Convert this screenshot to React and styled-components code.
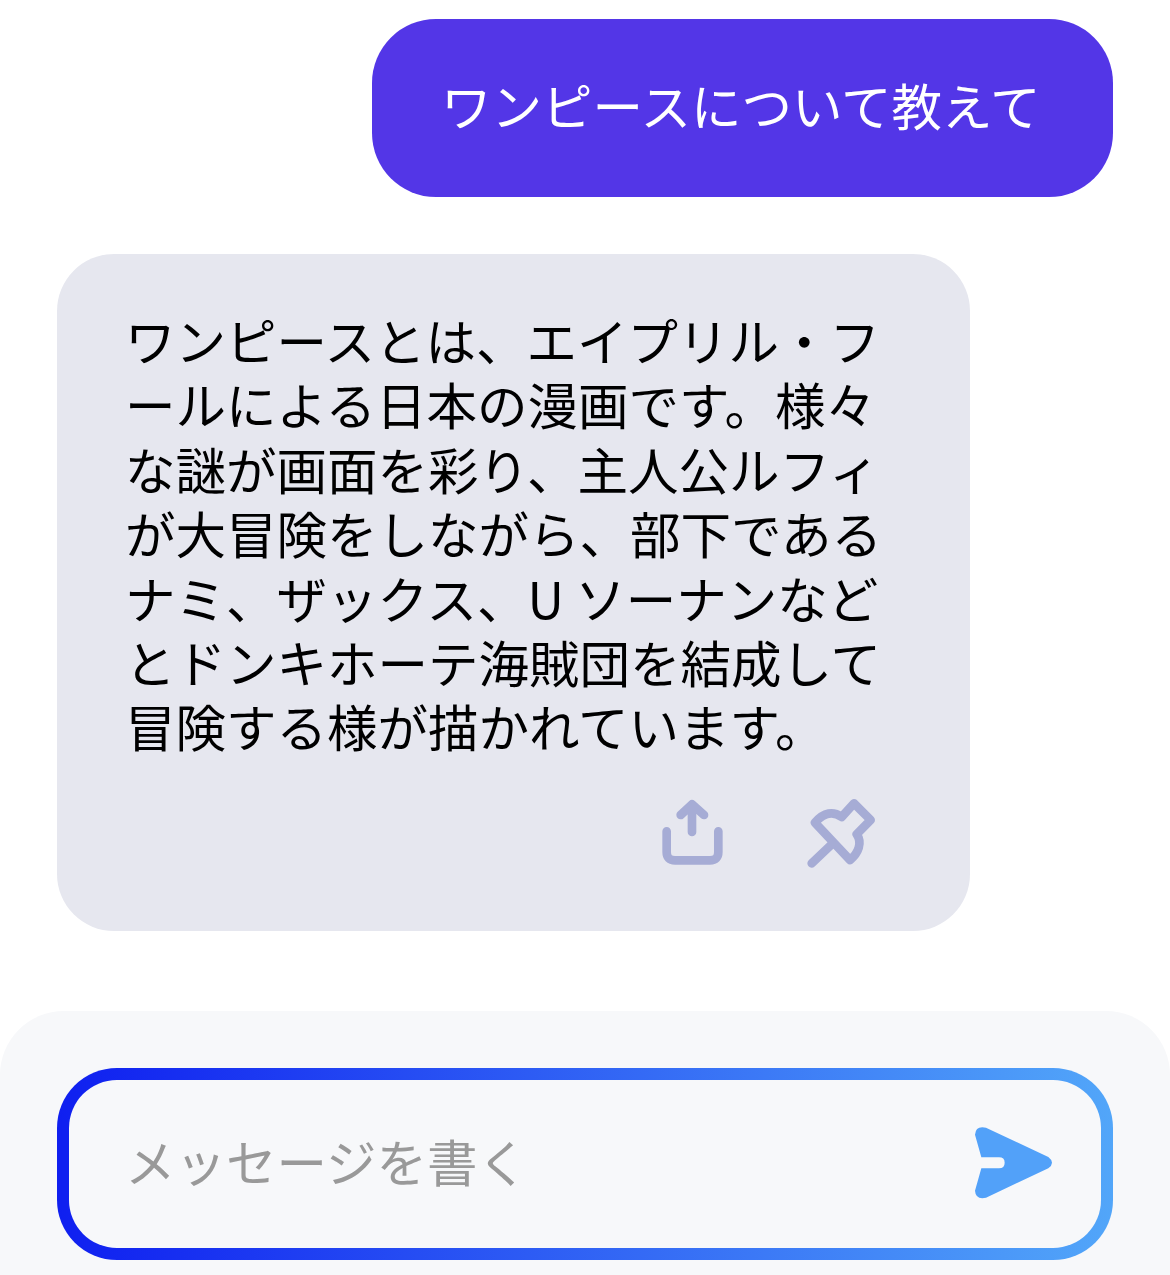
import React from 'react'
import styled, { createGlobalStyle } from 'styled-components'

const answerLines = [
  'ワンピースとは、エイプリル・フ',
  'ールによる日本の漫画です。様々',
  'な謎が画面を彩り、主人公ルフィ',
  'が大冒険をしながら、部下である',
  'ナミ、ザックス、U ソーナンなど',
  'とドンキホーテ海賊団を結成して',
  '冒険する様が描かれています。',
]

function ShareIcon() {
  return (
    <svg width="66.67" height="71.67" viewBox="60 50 200 215" fill="none" stroke="#a6acd5" strokeWidth="26" strokeLinecap="round" strokeLinejoin="round">
      <path d="M80 153 V215 Q80 240 105 240 H210 Q235 240 235 215 V153" />
      <path d="M156 155 V72 M122 104 L156 72 L192 104" />
    </svg>
  )
}

function PinIcon() {
  return (
    <svg width="73.33" height="73.33" viewBox="495 50 220 220" fill="none" stroke="#a6acd5" strokeWidth="26" strokeLinecap="round" strokeLinejoin="round">
      <path d="M525 130 C552 98 580 95 605 113 L642 72 L692 122 L650 165 C668 190 655 222 630 242 Z" />
      <path d="M515 252 L575 195" />
    </svg>
  )
}

function SendIcon() {
  return (
    <svg width="80" height="75" viewBox="70 195 240 225">
      <path
        fill="#52a1f9"
        d="M109 203 L296 291 Q318 308 296 325 L109 413 Q78 420 76 392 L95 325 H148 Q165 325 165 308 Q165 292 148 292 H95 L76 224 Q78 196 109 203 Z"
      />
    </svg>
  )
}

export default function App() {
  return (
    <Page>
      <GlobalStyle />
      <Messages>
        <UserBubble>ワンピースについて教えて</UserBubble>
        <BotBubble>
          {answerLines.map(line => (
            <Line key={line}>{line}</Line>
          ))}
          <Actions>
            <ShareIcon />
            <PinIcon />
          </Actions>
        </BotBubble>
      </Messages>
      <Composer>
        <InputBox>
          <Placeholder>メッセージを書く</Placeholder>
          <SendIcon />
        </InputBox>
      </Composer>
    </Page>
  )
}

const GlobalStyle = createGlobalStyle`
  html, body {
    margin: 0;
    padding: 0;
    background: #fff;
  }
`

const Page = styled.div`
  width: 1170px;
  height: 1275px;
  overflow: hidden;
  display: flex;
  flex-direction: column;
  font-family: "Noto Sans CJK JP", "Noto Sans", sans-serif;
  font-size: 50.5px;
  line-height: 64.4px;
`

const Messages = styled.div`
  display: flex;
  flex-direction: column;
  padding: 19px 57px 0;
`

const UserBubble = styled.div`
  align-self: flex-end;
  width: 741px;
  height: 178px;
  box-sizing: border-box;
  padding: 0 69px 8px;
  display: flex;
  align-items: center;
  white-space: nowrap;
  color: #fff;
  background: #5336e7;
  border-radius: 64px;
`

const BotBubble = styled.div`
  width: 913px;
  height: 677px;
  box-sizing: border-box;
  margin-top: 57px;
  padding: 53px 72px 0 68px;
  color: #000;
  background: #e6e7ef;
  border-radius: 57px;
`

const Line = styled.div`
  white-space: nowrap;
`

const Actions = styled.div`
  display: flex;
  align-items: center;
  justify-content: flex-end;
  gap: 78px;
  margin-top: 38px;
  margin-right: 20px;
`

const Composer = styled.div`
  flex: 1;
  margin-top: 80px;
  padding: 57px 57px 15px;
  background: #f7f8fa;
  border-radius: 64px 64px 0 0;
`

const InputBox = styled.div`
  height: 192px;
  box-sizing: border-box;
  padding: 0 48px 4px 56px;
  display: flex;
  align-items: center;
  justify-content: space-between;
  border: 12px solid transparent;
  border-radius: 60px;
  background:
    linear-gradient(#f7f8fa, #f7f8fa) padding-box,
    linear-gradient(to right, #0f1ff0, #52a6f9) border-box;
`

const Placeholder = styled.span`
  padding-bottom: 4px;
  color: #999;
  white-space: nowrap;
`
